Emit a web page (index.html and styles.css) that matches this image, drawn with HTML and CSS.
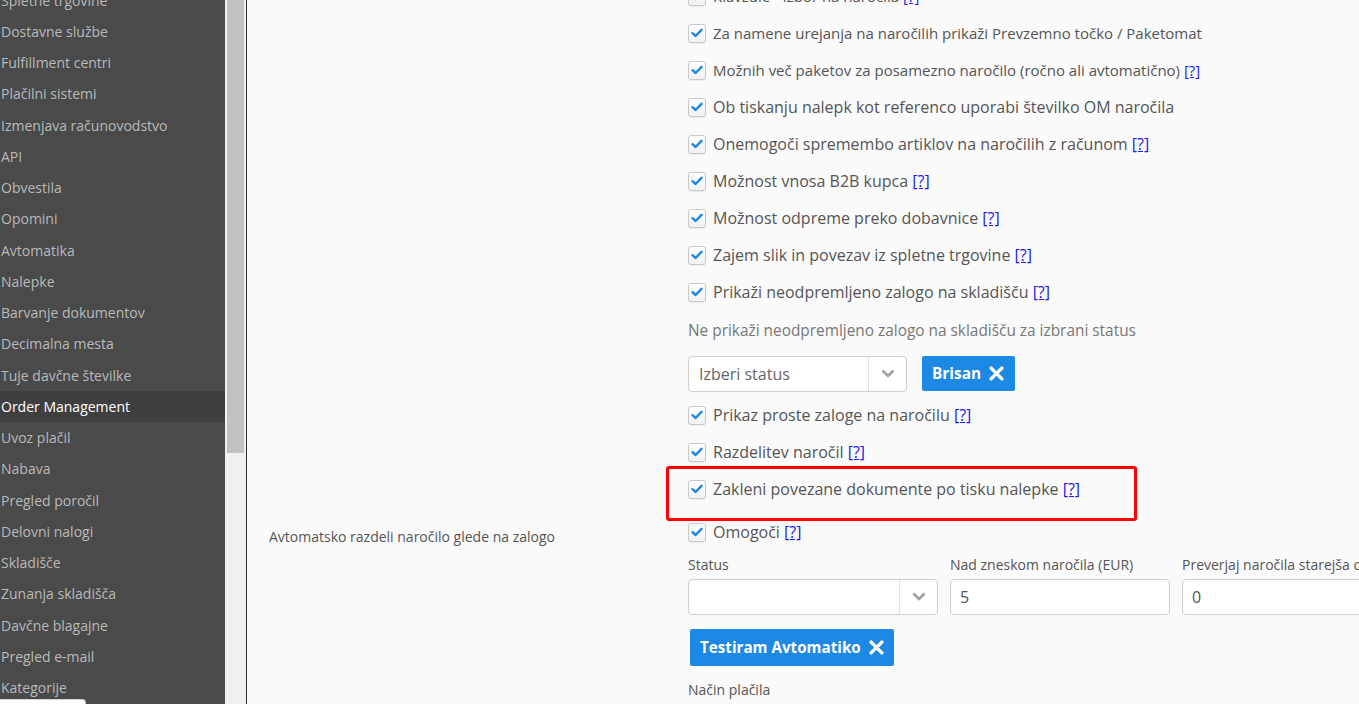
FILE: index.html
```html
<!DOCTYPE html>
<html lang="sl">
<head>
<meta charset="utf-8">
<title>Order Management</title>
<link rel="stylesheet" href="styles.css">
</head>
<body>
<div class="app">
  <aside class="sidebar">
    <ul class="menu">
      <li>Spletne trgovine</li>
      <li>Dostavne službe</li>
      <li>Fulfillment centri</li>
      <li>Plačilni sistemi</li>
      <li>Izmenjava računovodstvo</li>
      <li>API</li>
      <li>Obvestila</li>
      <li>Opomini</li>
      <li>Avtomatika</li>
      <li>Nalepke</li>
      <li>Barvanje dokumentov</li>
      <li>Decimalna mesta</li>
      <li>Tuje davčne številke</li>
      <li class="active">Order Management</li>
      <li>Uvoz plačil</li>
      <li>Nabava</li>
      <li>Pregled poročil</li>
      <li>Delovni nalogi</li>
      <li>Skladišče</li>
      <li>Zunanja skladišča</li>
      <li>Davčne blagajne</li>
      <li>Pregled e-mail</li>
      <li>Kategorije</li>
    </ul>
    <div class="corner-popup"></div>
  </aside>
  <div class="scrolltrack"><div class="scrollthumb"></div></div>
  <main class="main">
    <section class="group">
      <div class="group-label"></div>
      <div class="group-body">
        <div class="check-row sm"><span class="cb"><svg viewBox="0 0 12 10" width="12" height="10"><path d="M1.5 5.2 L4.6 8 L10.5 1.8" fill="none" stroke="#1e88e5" stroke-width="2.4" stroke-linecap="round" stroke-linejoin="round"/></svg></span><span class="txt">Klavzule - izbor na naročila <a class="help">[?]</a></span></div>
        <div class="check-row sm"><span class="cb"><svg viewBox="0 0 12 10" width="12" height="10"><path d="M1.5 5.2 L4.6 8 L10.5 1.8" fill="none" stroke="#1e88e5" stroke-width="2.4" stroke-linecap="round" stroke-linejoin="round"/></svg></span><span class="txt">Za namene urejanja na naročilih prikaži Prevzemno točko / Paketomat</span></div>
        <div class="check-row sm"><span class="cb"><svg viewBox="0 0 12 10" width="12" height="10"><path d="M1.5 5.2 L4.6 8 L10.5 1.8" fill="none" stroke="#1e88e5" stroke-width="2.4" stroke-linecap="round" stroke-linejoin="round"/></svg></span><span class="txt">Možnih več paketov za posamezno naročilo (ročno ali avtomatično) <a class="help">[?]</a></span></div>
        <div class="check-row"><span class="cb"><svg viewBox="0 0 12 10" width="12" height="10"><path d="M1.5 5.2 L4.6 8 L10.5 1.8" fill="none" stroke="#1e88e5" stroke-width="2.4" stroke-linecap="round" stroke-linejoin="round"/></svg></span><span class="txt">Ob tiskanju nalepk kot referenco uporabi številko OM naročila</span></div>
        <div class="check-row"><span class="cb"><svg viewBox="0 0 12 10" width="12" height="10"><path d="M1.5 5.2 L4.6 8 L10.5 1.8" fill="none" stroke="#1e88e5" stroke-width="2.4" stroke-linecap="round" stroke-linejoin="round"/></svg></span><span class="txt">Onemogoči spremembo artiklov na naročilih z računom <a class="help">[?]</a></span></div>
        <div class="check-row"><span class="cb"><svg viewBox="0 0 12 10" width="12" height="10"><path d="M1.5 5.2 L4.6 8 L10.5 1.8" fill="none" stroke="#1e88e5" stroke-width="2.4" stroke-linecap="round" stroke-linejoin="round"/></svg></span><span class="txt">Možnost vnosa B2B kupca <a class="help">[?]</a></span></div>
        <div class="check-row"><span class="cb"><svg viewBox="0 0 12 10" width="12" height="10"><path d="M1.5 5.2 L4.6 8 L10.5 1.8" fill="none" stroke="#1e88e5" stroke-width="2.4" stroke-linecap="round" stroke-linejoin="round"/></svg></span><span class="txt">Možnost odpreme preko dobavnice <a class="help">[?]</a></span></div>
        <div class="check-row"><span class="cb"><svg viewBox="0 0 12 10" width="12" height="10"><path d="M1.5 5.2 L4.6 8 L10.5 1.8" fill="none" stroke="#1e88e5" stroke-width="2.4" stroke-linecap="round" stroke-linejoin="round"/></svg></span><span class="txt">Zajem slik in povezav iz spletne trgovine <a class="help">[?]</a></span></div>
        <div class="check-row"><span class="cb"><svg viewBox="0 0 12 10" width="12" height="10"><path d="M1.5 5.2 L4.6 8 L10.5 1.8" fill="none" stroke="#1e88e5" stroke-width="2.4" stroke-linecap="round" stroke-linejoin="round"/></svg></span><span class="txt">Prikaži neodpremljeno zalogo na skladišču <a class="help">[?]</a></span></div>

        <div class="sub-label">Ne prikaži neodpremljeno zalogo na skladišču za izbrani status</div>
        <div class="select-line">
          <div class="select narrow">
            <span class="select-text">Izberi status</span>
            <span class="select-arrow"><svg viewBox="0 0 14 9" width="14" height="9"><path d="M1.5 1.5 L7 7 L12.5 1.5" fill="none" stroke="#a0a0a0" stroke-width="2.6"/></svg></span>
          </div>
          <button class="tag-btn">Brisan <svg viewBox="0 0 14 14" width="15" height="15"><path d="M2 2 L12 12 M12 2 L2 12" stroke="#fff" stroke-width="3.2" stroke-linecap="round"/></svg></button>
        </div>

        <div class="check-row"><span class="cb"><svg viewBox="0 0 12 10" width="12" height="10"><path d="M1.5 5.2 L4.6 8 L10.5 1.8" fill="none" stroke="#1e88e5" stroke-width="2.4" stroke-linecap="round" stroke-linejoin="round"/></svg></span><span class="txt">Prikaz proste zaloge na naročilu <a class="help">[?]</a></span></div>
        <div class="check-row"><span class="cb"><svg viewBox="0 0 12 10" width="12" height="10"><path d="M1.5 5.2 L4.6 8 L10.5 1.8" fill="none" stroke="#1e88e5" stroke-width="2.4" stroke-linecap="round" stroke-linejoin="round"/></svg></span><span class="txt">Razdelitev naročil <a class="help">[?]</a></span></div>
        <div class="check-row highlighted"><span class="cb"><svg viewBox="0 0 12 10" width="12" height="10"><path d="M1.5 5.2 L4.6 8 L10.5 1.8" fill="none" stroke="#1e88e5" stroke-width="2.4" stroke-linecap="round" stroke-linejoin="round"/></svg></span><span class="txt">Zakleni povezane dokumente po tisku nalepke <a class="help">[?]</a></span></div>
      </div>
    </section>

    <section class="group second">
      <div class="group-label"><span class="label-text">Avtomatsko razdeli naročilo glede na zalogo</span></div>
      <div class="group-body">
        <div class="check-row"><span class="cb"><svg viewBox="0 0 12 10" width="12" height="10"><path d="M1.5 5.2 L4.6 8 L10.5 1.8" fill="none" stroke="#1e88e5" stroke-width="2.4" stroke-linecap="round" stroke-linejoin="round"/></svg></span><span class="txt">Omogoči <a class="help">[?]</a></span></div>
        <div class="fields">
          <div class="field f1">
            <label class="field-label">Status</label>
            <div class="select">
              <span class="select-text"></span>
              <span class="select-arrow"><svg viewBox="0 0 14 9" width="14" height="9"><path d="M1.5 1.5 L7 7 L12.5 1.5" fill="none" stroke="#a0a0a0" stroke-width="2.6"/></svg></span>
            </div>
          </div>
          <div class="field f2">
            <label class="field-label">Nad zneskom naročila (EUR)</label>
            <div class="input">5</div>
          </div>
          <div class="field f3">
            <label class="field-label">Preverjaj naročila starejša od (dni)</label>
            <div class="input">0</div>
          </div>
        </div>
        <button class="tag-btn wide">Testiram Avtomatiko <svg viewBox="0 0 14 14" width="15" height="15"><path d="M2 2 L12 12 M12 2 L2 12" stroke="#fff" stroke-width="3.2" stroke-linecap="round"/></svg></button>
        <div class="field-label pay">Način plačila</div>
      </div>
    </section>
  </main>
</div>
</body>
</html>
```

FILE: styles.css
```css
* { box-sizing: border-box; }

html, body {
  margin: 0;
  padding: 0;
  height: 704px;
  overflow: hidden;
  font-family: "Open Sans", "Noto Sans", "DejaVu Sans", sans-serif;
}

.app {
  display: flex;
  height: 704px;
  width: 1359px;
  overflow: hidden;
}

/* Sidebar */
.sidebar {
  position: relative;
  width: 225px;
  flex: 0 0 225px;
  background: #4a4a4a;
  overflow: hidden;
}

.menu {
  list-style: none;
  margin: -15.6px 0 0 0;
  padding: 0;
}

.menu li {
  height: 31.25px;
  display: flex;
  align-items: center;
  padding-left: 1px;
  font-size: 14px;
  color: #b9b9b9;
  white-space: nowrap;
}

.menu li.active {
  background: #3f3f3f;
  color: #ffffff;
}

.corner-popup {
  position: absolute;
  left: 0;
  top: 699px;
  width: 86px;
  height: 20px;
  background: #ffffff;
  border-top-right-radius: 4px;
  border: 1px solid #d0d0d0;
  border-left: 0;
}

/* Scrollbar */
.scrolltrack {
  width: 22px;
  flex: 0 0 22px;
  background: #f0f0f0;
  padding: 0 2px;
  border-right: 1px solid #2e2e2e;
}

.scrollthumb {
  height: 453px;
  width: 17px;
  background: #c1c1c1;
}

/* Main */
.main {
  flex: 1 1 auto;
  background: #fafafa;
  color: #555;
  min-width: 0;
  overflow: hidden;
}

.group {
  display: grid;
  grid-template-columns: 441px 1fr;
}

.group:first-child {
  margin-top: -22.5px;
}

.group.second {
  margin-top: 6px;
}

.group-label {
  padding-left: 22px;
}

.label-text {
  display: block;
  padding-top: 13px;
  font-size: 14px;
  line-height: 20px;
  color: #555;
}

.group-body {
  min-width: 0;
}

.check-row {
  position: relative;
  height: 37px;
  display: flex;
  align-items: center;
  gap: 7px;
  font-size: 16px;
  color: #555;
  white-space: nowrap;
}

.check-row.sm { font-size: 15px; }

.cb {
  width: 18px;
  height: 19px;
  flex: 0 0 18px;
  border: 1px solid #c8c8c8;
  border-radius: 3px;
  background: linear-gradient(#ffffff, #f1f1f1);
  box-shadow: 0 1px 1px rgba(0,0,0,0.06);
  display: flex;
  align-items: center;
  justify-content: center;
}

.help {
  color: #1c1ce6;
  text-decoration: underline;
  cursor: pointer;
}

.highlighted::after {
  content: "";
  position: absolute;
  left: -22px;
  top: -5px;
  width: 465px;
  bottom: -13px;
  border: 3px solid #ff0000;
  border-radius: 3px;
}

.sub-label {
  margin-top: 10px;
  font-size: 15.4px;
  line-height: 20px;
  color: #777;
  white-space: nowrap;
}

.select-line {
  display: flex;
  align-items: center;
  gap: 15px;
  margin-top: 15px;
  margin-bottom: 5px;
}

.select {
  display: flex;
  height: 36px;
  background: #ffffff;
  border: 1px solid #cfcfcf;
  border-radius: 4px;
}

.select.narrow {
  width: 219px;
}

.select-text {
  flex: 1 1 auto;
  padding-left: 10px;
  font-size: 16px;
  line-height: 34px;
  color: #666;
}

.select-arrow {
  width: 38px;
  flex: 0 0 38px;
  border-left: 1px solid #e2e2e2;
  display: flex;
  align-items: center;
  justify-content: center;
}

.tag-btn {
  display: inline-flex;
  align-items: center;
  gap: 8px;
  height: 35px;
  padding: 0 11px 0 10px;
  background: #1e88e5;
  color: #ffffff;
  border: 0;
  border-radius: 2px;
  font-family: inherit;
  font-weight: 700;
  font-size: 15.4px;
}

.tag-btn.wide {
  height: 37px;
  margin-top: 14px;
  margin-left: 2px;
  padding: 0 10px;
  font-size: 15.2px;
}

.fields {
  display: flex;
  gap: 12px;
  margin-top: 4px;
}

.field {
  display: flex;
  flex-direction: column;
  gap: 4px;
}

.f1 { width: 250px; flex: 0 0 250px; }
.f2 { width: 220px; flex: 0 0 220px; }
.f3 { width: 250px; flex: 0 0 250px; }

.field-label {
  font-size: 14px;
  line-height: 20px;
  color: #555;
  white-space: nowrap;
}

.input {
  height: 36px;
  background: #ffffff;
  border: 1px solid #cfcfcf;
  border-radius: 4px;
  padding-left: 9px;
  font-size: 16px;
  line-height: 34px;
  color: #555;
}

.pay {
  margin-top: 14px;
}
```
